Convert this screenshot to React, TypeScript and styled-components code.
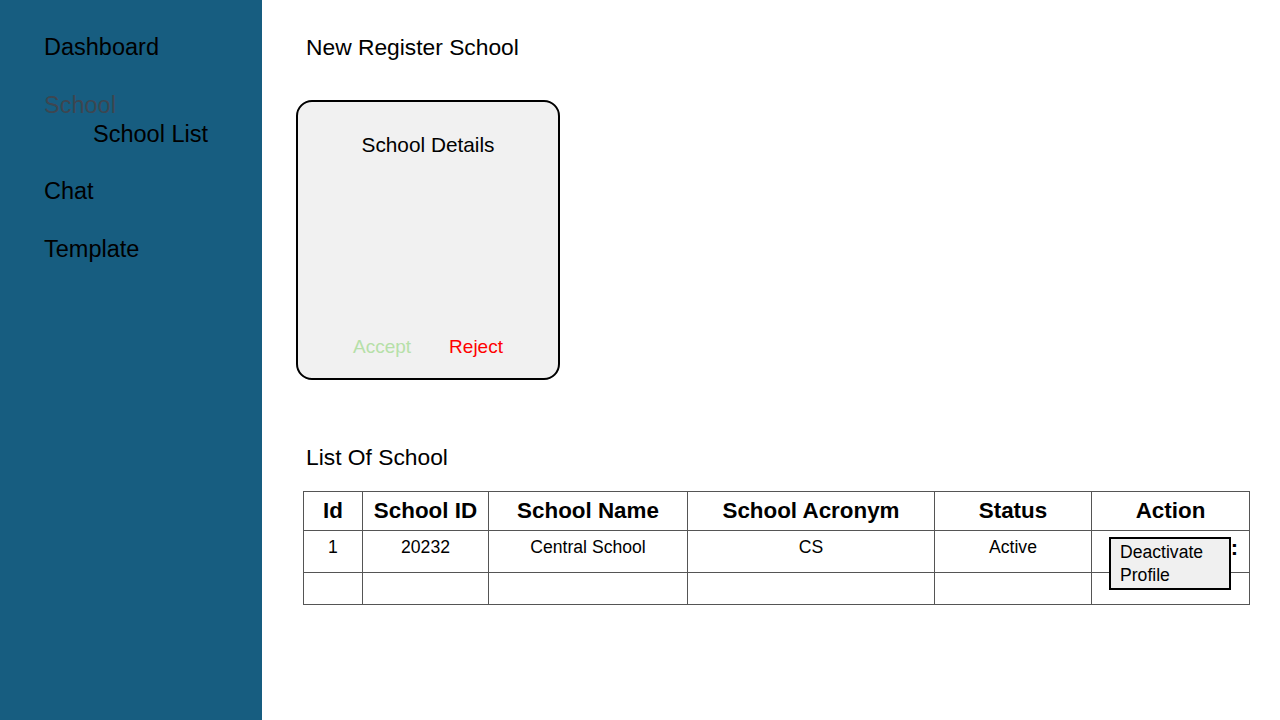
import React from "react";
import styled, { createGlobalStyle } from "styled-components";

const Global = createGlobalStyle`
  html, body { margin: 0; padding: 0; }
  body { font-family: "Liberation Sans", Arial, sans-serif; color: #000; background: #fff; }
  * { box-sizing: border-box; }
`;

const Page = styled.div`
  display: flex;
  width: 1280px;
  height: 720px;
  overflow: hidden;
`;

const Sidebar = styled.nav`
  width: 262px;
  flex-shrink: 0;
  background: #175d80;
  padding: 33px 0 0 44px;
  display: flex;
  flex-direction: column;
`;

const NavItem = styled.div<{ $muted?: boolean; $sub?: boolean; $gap?: number }>`
  font-size: 23.5px;
  line-height: 28px;
  color: ${(p) => (p.$muted ? "#3d4650" : "#000")};
  margin-left: ${(p) => (p.$sub ? "49px" : "0")};
  margin-top: ${(p) => p.$gap ?? 0}px;
`;

const Main = styled.main`
  flex: 1;
  padding: 33px 31px 0 34px;
  display: flex;
  flex-direction: column;
`;

const Heading = styled.h2`
  margin: 0 0 0 10px;
  font-weight: 400;
  font-size: 22.8px;
  line-height: 28px;
`;

const Card = styled.section`
  margin-top: 39px;
  width: 264px;
  height: 280px;
  border: 2px solid #000;
  border-radius: 16px;
  background: #f1f1f1;
  display: flex;
  flex-direction: column;
  align-items: center;
  padding: 31px 0 20px;
`;

const CardTitle = styled.div`
  font-size: 20.8px;
  line-height: 24px;
  flex: 1;
`;

const CardActions = styled.div`
  display: flex;
  gap: 38px;
  font-size: 19px;
  line-height: 22px;
`;

const ActionLink = styled.span<{ $color: string }>`
  color: ${(p) => p.$color};
`;

const ListHeading = styled(Heading)`
  margin-top: 63px;
`;

const Table = styled.table`
  margin-top: 20px;
  margin-left: 7px;
  border-collapse: collapse;
  width: 946px;
  table-layout: fixed;
  border: 1px solid #222;
`;

const Th = styled.th<{ $w: number }>`
  width: ${(p) => p.$w}px;
  height: 39px;
  border: 1px solid #555;
  font-size: 22.4px;
  font-weight: 700;
  text-align: center;
  vertical-align: middle;
  padding: 0;
`;

const Td = styled.td<{ $h: number }>`
  height: ${(p) => p.$h}px;
  border: 1px solid #555;
  font-size: 17.6px;
  line-height: 20px;
  text-align: center;
  vertical-align: top;
  padding: 6px 0 0;
  position: relative;
`;

const Popup = styled.div`
  position: absolute;
  left: 17px;
  top: 6px;
  width: 122px;
  height: 53px;
  border: 2px solid #000;
  background: #f0f0f0;
  text-align: left;
  font-size: 17.6px;
  line-height: 23px;
  padding: 2px 0 0 9px;
  z-index: 2;
`;

const Dots = styled.span`
  position: absolute;
  right: 11px;
  top: 5px;
  font-weight: 700;
  font-size: 22px;
  line-height: 24px;
`;

const cols = [
  { label: "Id", w: 59 },
  { label: "School ID", w: 126 },
  { label: "School Name", w: 199 },
  { label: "School Acronym", w: 247 },
  { label: "Status", w: 157 },
  { label: "Action", w: 158 },
];

export default function App() {
  return (
    <>
      <Global />
      <Page>
        <Sidebar>
          <NavItem>Dashboard</NavItem>
          <NavItem $muted $gap={30}>School</NavItem>
          <NavItem $sub $gap={1}>School List</NavItem>
          <NavItem $gap={29}>Chat</NavItem>
          <NavItem $gap={30}>Template</NavItem>
        </Sidebar>
        <Main>
          <Heading>New Register School</Heading>
          <Card>
            <CardTitle>School Details</CardTitle>
            <CardActions>
              <ActionLink $color="#b6e0a8">Accept</ActionLink>
              <ActionLink $color="#ff0000">Reject</ActionLink>
            </CardActions>
          </Card>
          <ListHeading>List Of School</ListHeading>
          <Table>
            <thead>
              <tr>
                {cols.map((c) => (
                  <Th key={c.label} $w={c.w}>{c.label}</Th>
                ))}
              </tr>
            </thead>
            <tbody>
              <tr>
                <Td $h={42}>1</Td>
                <Td $h={42}>20232</Td>
                <Td $h={42}>Central School</Td>
                <Td $h={42}>CS</Td>
                <Td $h={42}>Active</Td>
                <Td $h={42}>
                  <Popup>Deactivate<br />Profile</Popup>
                  <Dots>:</Dots>
                </Td>
              </tr>
              <tr>
                <Td $h={32} />
                <Td $h={32} />
                <Td $h={32} />
                <Td $h={32} />
                <Td $h={32} />
                <Td $h={32} />
              </tr>
            </tbody>
          </Table>
        </Main>
      </Page>
    </>
  );
}
